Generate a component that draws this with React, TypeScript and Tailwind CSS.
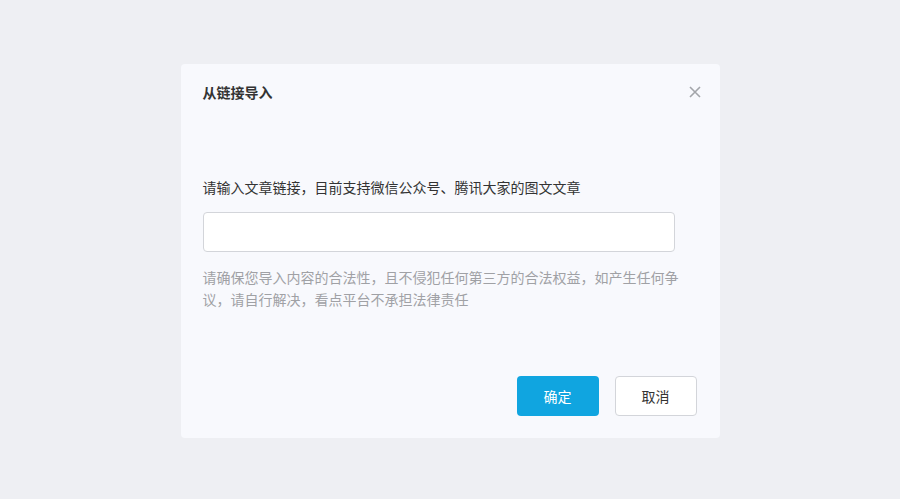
export default function App() {
  return (
    <div
      className="flex h-screen items-center justify-center bg-[#eeeff3] pt-[3px]"
      style={{ fontFamily: '"Noto Sans CJK SC", "Noto Sans", sans-serif' }}
    >
      {/* Dialog */}
      <div className="flex w-[539px] flex-col rounded-[4px] bg-[#f8f9fd] pb-[22px] pl-[22px] pr-[23px]">
        {/* Header */}
        <div className="flex h-[56px] items-center justify-between">
          <h2 className="text-[14px] font-bold leading-5 text-[#333]">从链接导入</h2>
          <button className="mr-[-6px] flex h-4 w-4 items-center justify-center text-[#a3a5aa]">
            <svg width="12" height="12" viewBox="0 0 12 12" fill="none">
              <path d="M1 1L11 11M11 1L1 11" stroke="currentColor" strokeWidth="1.6" />
            </svg>
          </button>
        </div>

        <p className="mt-[57px] text-[14px] leading-5 text-[#333]">
          请输入文章链接，目前支持微信公众号、腾讯大家的图文文章
        </p>
        <input
          type="text"
          className="mt-[15px] h-10 w-[472px] rounded-[4px] border border-[#d3d5da] bg-white px-3 text-[14px] outline-none"
        />
        <p className="mt-[14px] text-[14px] leading-[22px] text-[#a0a1a5]">
          请确保您导入内容的合法性，且不侵犯任何第三方的合法权益，如产生任何争议，请自行解决，看点平台不承担法律责任
        </p>

        {/* Footer */}
        <div className="mt-[66px] flex justify-end gap-4">
          <button className="h-10 w-[82px] rounded-[4px] bg-[#10a5e0] text-[14px] text-white">确定</button>
          <button className="h-10 w-[82px] rounded-[4px] border border-[#d3d5da] bg-white text-[14px] text-[#333]">
            取消
          </button>
        </div>
      </div>
    </div>
  );
}
